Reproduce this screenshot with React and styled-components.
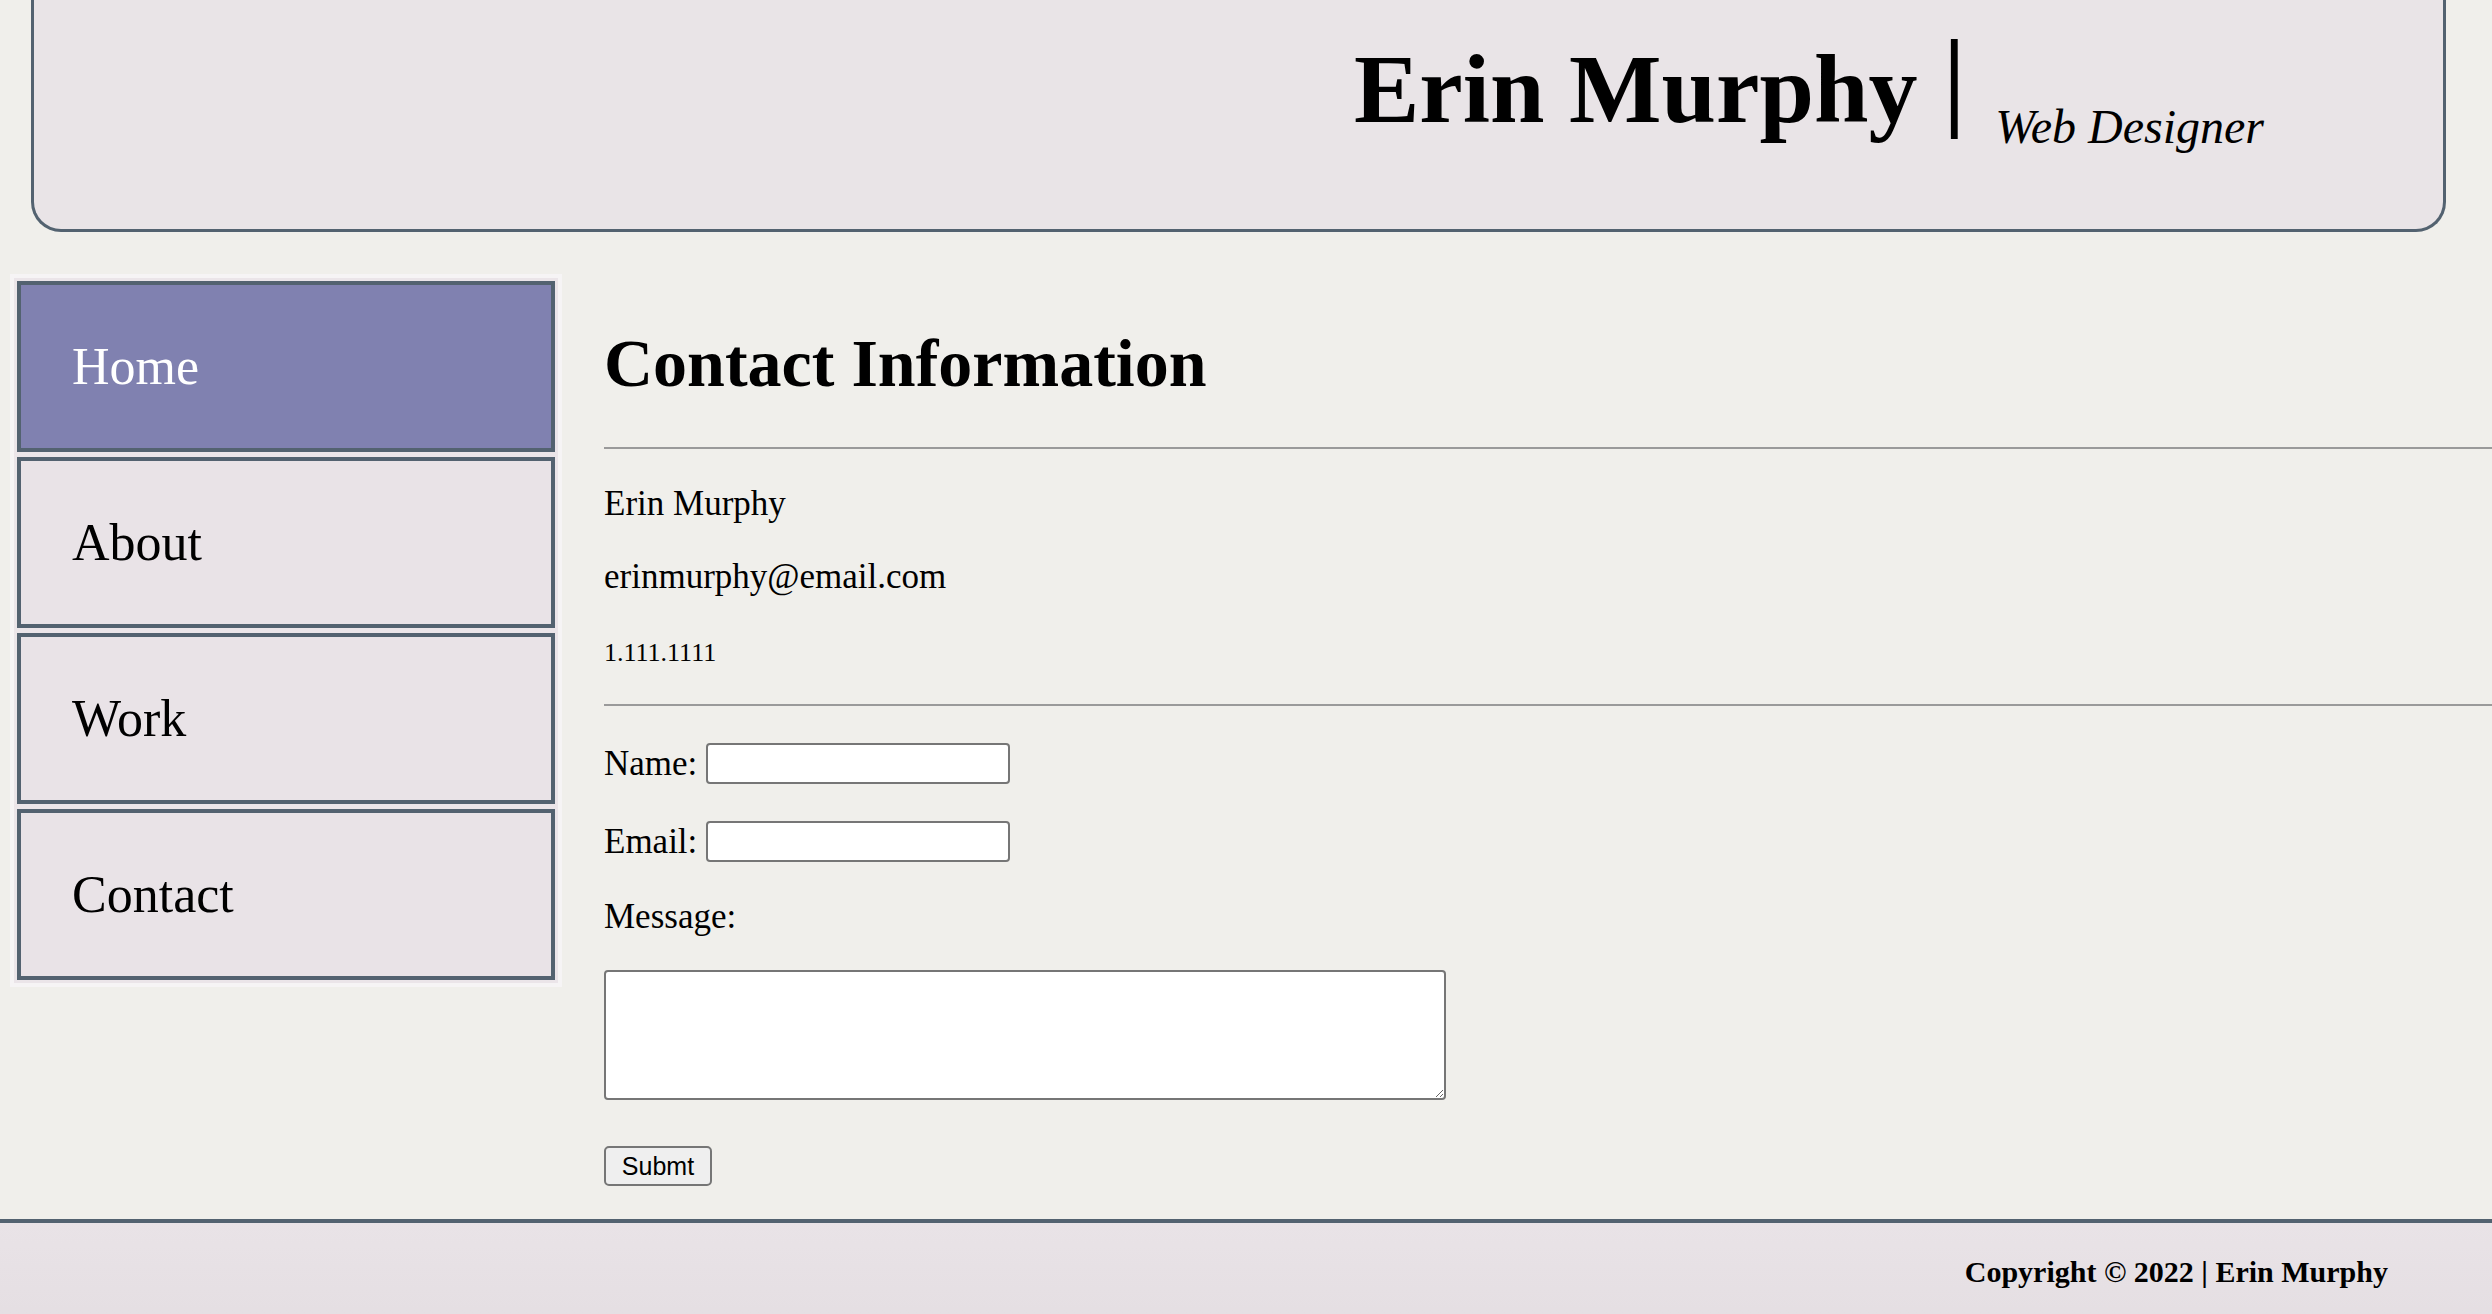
import styled, { createGlobalStyle } from "styled-components";

const GlobalStyle = createGlobalStyle`
  html, body {
    margin: 0;
    padding: 0;
    background: #f0efeb;
  }
  body {
    font-family: "Liberation Serif", "Times New Roman", serif;
    color: #000;
  }
`;

const navItems = [
  { label: "Home", active: true },
  { label: "About" },
  { label: "Work" },
  { label: "Contact" },
];

const App = () => {
  return (
    <>
      <GlobalStyle />
      <Header>
        <Title>
          <Name>Erin Murphy</Name>
          <Pipe>|</Pipe>
          <Role>Web Designer</Role>
        </Title>
      </Header>

      <Body>
        <Nav>
          {navItems.map((item) => (
            <NavItem key={item.label} $active={item.active}>
              {item.label}
            </NavItem>
          ))}
        </Nav>

        <Main>
          <Heading>Contact Information</Heading>
          <Rule />
          <Info>Erin Murphy</Info>
          <Info>erinmurphy@email.com</Info>
          <Info $small>1.111.1111</Info>
          <Rule $after />

          <Form onSubmit={(e) => e.preventDefault()}>
            <Row>
              <Label htmlFor="name">Name:</Label>
              <Input id="name" type="text" />
            </Row>
            <Row>
              <Label htmlFor="email">Email:</Label>
              <Input id="email" type="email" />
            </Row>
            <Label as="div" $block>Message:</Label>
            <Message />
            <SubmitButton type="submit">Submt</SubmitButton>
          </Form>
        </Main>
      </Body>

      <Footer>Copyright © 2022 | Erin Murphy</Footer>
    </>
  );
};

export default App;

const Header = styled.header`
  height: 229px;
  margin: 0 46px 0 31px;
  background: #e9e4e7;
  border: 3px solid #536270;
  border-top: none;
  border-radius: 0 0 30px 30px;
  display: flex;
  justify-content: flex-end;
  padding-right: 179px;
`;

const Title = styled.h1`
  margin: 0;
  padding-top: 40px;
  line-height: 1;
  white-space: nowrap;
`;

const Name = styled.span`
  font-size: 98px;
  font-weight: 700;
`;

const Pipe = styled.span`
  font-size: 98px;
  font-weight: 700;
  margin: 0 30px 0 26px;
  display: inline-block;
  transform: translateY(-11px) scaleY(1.12);
  transform-origin: 50% 40%;
`;

const Role = styled.span`
  font-size: 48px;
  font-style: italic;
  font-weight: 400;
  vertical-align: -21px;
`;

const Body = styled.div`
  display: flex;
  align-items: flex-start;
  margin-top: 42px;
`;

const Nav = styled.nav`
  width: 538px;
  margin-left: 10px;
  padding: 3px;
  background: #ebe5e9;
  border: 4px solid #f6f4f5;
  display: flex;
  flex-direction: column;
  gap: 5px;
  flex-shrink: 0;
`;

const NavItem = styled.a`
  display: flex;
  align-items: center;
  height: 163px;
  padding-left: 51px;
  border: 4px solid #536270;
  background: ${(p) => (p.$active ? "#8081b0" : "#e9e3e7")};
  color: ${(p) => (p.$active ? "#ffffff" : "#000000")};
  font-size: 52px;
  text-decoration: none;
  cursor: pointer;
`;

const Main = styled.main`
  flex: 1;
  margin-left: 42px;
  min-width: 0;
`;

const Heading = styled.h2`
  margin: 49px 0 0;
  font-size: 68px;
  line-height: 80px;
  font-weight: 700;
`;

const Rule = styled.hr`
  margin: ${(p) => (p.$after ? "31px 0 0" : "44px 0 0")};
  border: none;
  border-top: 2px solid #9a9a9a;
  height: 0;
`;

const Info = styled.p`
  margin: 33px 0 0;
  padding-top: ${(p) => (p.$small ? "3px" : "0")};
  font-size: ${(p) => (p.$small ? "26px" : "35px")};
  line-height: 40px;

  &:first-of-type {
    margin-top: 35px;
  }
`;

const Form = styled.form`
  display: flex;
  flex-direction: column;
  align-items: flex-start;
`;

const Row = styled.div`
  display: flex;
  align-items: center;
  gap: 9px;
  margin-top: 37px;
`;

const Label = styled.label`
  font-size: 35px;
  line-height: 40px;
  margin-top: ${(p) => (p.$block ? "35px" : "0")};
`;

const Input = styled.input`
  box-sizing: border-box;
  width: 304px;
  height: 41px;
  border: 2px solid #767676;
  border-radius: 4px;
  background: #ffffff;
  padding: 2px 6px;
  font-size: 24px;
`;

const Message = styled.textarea`
  box-sizing: border-box;
  width: 842px;
  height: 130px;
  margin-top: 33px;
  border: 2px solid #767676;
  border-radius: 4px;
  background: #ffffff;
  font-family: "Liberation Mono", monospace;
  font-size: 24px;
`;

const SubmitButton = styled.button`
  box-sizing: border-box;
  margin-top: 46px;
  width: 108px;
  height: 40px;
  padding: 0;
  border: 2px solid #767676;
  border-radius: 5px;
  background: #efefef;
  color: #000;
  font-family: "Liberation Sans", Arial, sans-serif;
  font-size: 25px;
`;

const Footer = styled.footer`
  margin-top: 33px;
  border-top: 4px solid #536270;
  background: linear-gradient(#e9e3e7, #e4dee2);
  padding: 29px 104px 40px 0;
  text-align: right;
  font-size: 30px;
  line-height: 40px;
  font-weight: 700;
`;
